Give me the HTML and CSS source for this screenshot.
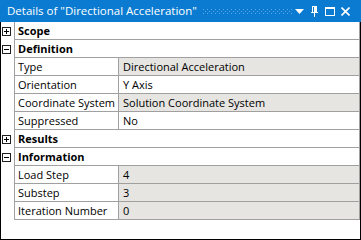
FILE: index.html
```html
<!DOCTYPE html>
<html lang="en">
<head>
    <meta charset="UTF-8">
    <title>Details of "Directional Acceleration"</title>
    <link rel="stylesheet" href="styles.css">
</head>
<body>

    <div class="panel">
        <div class="titlebar">
            <span class="title">Details of "Directional Acceleration"</span>
            <svg class="grip" height="5">
                <defs>
                    <pattern id="dots" width="4" height="4" patternUnits="userSpaceOnUse">
                        <rect x="0" y="0" width="1" height="1" fill="#5fa9e8"/>
                        <rect x="2" y="2" width="1" height="1" fill="#5fa9e8"/>
                    </pattern>
                </defs>
                <rect width="100%" height="5" fill="url(#dots)"/>
            </svg>
            <span class="tools">
                <svg width="9" height="5" class="tool-menu"><polygon points="0,0 9,0 4.5,5" fill="#fff"/></svg>
                <svg width="7" height="11" class="tool-pin">
                    <path d="M1.5 0 V6 M5.5 0 V6 M1 0.5 H6" stroke="#fff" fill="none"/>
                    <rect x="3" y="1" width="2" height="5" fill="#fff"/>
                    <rect x="0" y="6" width="7" height="1" fill="#fff"/>
                    <rect x="3" y="7" width="1" height="4" fill="#fff"/>
                </svg>
                <svg width="10" height="9" class="tool-max">
                    <rect x="0.5" y="0.5" width="9" height="8" stroke="#fff" fill="none"/>
                    <rect x="0" y="0" width="10" height="2" fill="#fff"/>
                </svg>
                <svg width="9" height="9" class="tool-close"><path d="M0.5 0.5 L8.5 8.5 M8.5 0.5 L0.5 8.5" stroke="#fff" stroke-width="1.6"/></svg>
            </span>
        </div>

        <div class="content">
            <table class="props">
                <colgroup>
                    <col class="col-gutter">
                    <col class="col-name">
                    <col class="col-value">
                </colgroup>
                <tr>
                    <td class="gutter"><svg class="toggle" width="9" height="9"><rect x="0.5" y="0.5" width="8" height="8"/><path d="M2 4.5 H7 M4.5 2 V7"/></svg></td>
                    <td class="head" colspan="2">Scope</td>
                </tr>
                <tr>
                    <td class="gutter"><svg class="toggle" width="9" height="9"><rect x="0.5" y="0.5" width="8" height="8"/><path d="M2 4.5 H7"/></svg></td>
                    <td class="head" colspan="2">Definition</td>
                </tr>
                <tr>
                    <td class="gutter"></td>
                    <td class="name">Type</td>
                    <td class="value readonly">Directional Acceleration</td>
                </tr>
                <tr>
                    <td class="gutter"></td>
                    <td class="name">Orientation</td>
                    <td class="value">Y Axis</td>
                </tr>
                <tr>
                    <td class="gutter"></td>
                    <td class="name">Coordinate System</td>
                    <td class="value readonly">Solution Coordinate System</td>
                </tr>
                <tr>
                    <td class="gutter"></td>
                    <td class="name">Suppressed</td>
                    <td class="value">No</td>
                </tr>
                <tr>
                    <td class="gutter"><svg class="toggle" width="9" height="9"><rect x="0.5" y="0.5" width="8" height="8"/><path d="M2 4.5 H7 M4.5 2 V7"/></svg></td>
                    <td class="head" colspan="2">Results</td>
                </tr>
                <tr>
                    <td class="gutter"><svg class="toggle" width="9" height="9"><rect x="0.5" y="0.5" width="8" height="8"/><path d="M2 4.5 H7"/></svg></td>
                    <td class="head" colspan="2">Information</td>
                </tr>
                <tr>
                    <td class="gutter"></td>
                    <td class="name">Load Step</td>
                    <td class="value readonly">4</td>
                </tr>
                <tr>
                    <td class="gutter"></td>
                    <td class="name">Substep</td>
                    <td class="value readonly">3</td>
                </tr>
                <tr>
                    <td class="gutter"></td>
                    <td class="name">Iteration Number</td>
                    <td class="value readonly">0</td>
                </tr>
            </table>
        </div>
    </div>

</body>
</html>
```

FILE: styles.css
```css
body {
    margin: 0;
    font-family: "Open Sans", "Liberation Sans", sans-serif;
    font-size: 11px;
    color: #000;
    background-color: #fff;
}

.panel {
    width: 361px;
    height: 240px;
    display: flex;
    flex-direction: column;
}

.titlebar {
    height: 22px;
    flex: none;
    background-color: #0a7bd0;
    color: #fff;
    display: flex;
    align-items: center;
    padding: 0 11px 0 7px;
    box-sizing: border-box;
}

.title {
    white-space: nowrap;
    font-size: 11.5px;
    line-height: 22px;
}

.grip {
    flex: 1;
    min-width: 0;
    margin: 0 3px 0 6px;
}

.tools {
    display: flex;
    align-items: center;
}

.tools svg {
    display: block;
    flex: none;
}

.tool-menu {
    margin-top: 1px;
}

.tool-pin {
    margin-left: 7px;
}

.tool-max {
    margin-left: 7px;
    margin-top: 1px;
}

.tool-close {
    margin-left: 6px;
    margin-top: 1px;
}

.content {
    flex: 1;
    border: 1px solid #000;
    border-top: none;
}

.props {
    border-collapse: separate;
    border-spacing: 0;
    table-layout: fixed;
    width: 359px;
}

.col-gutter {
    width: 13px;
}

.col-name {
    width: 104px;
}

.col-value {
    width: 242px;
}

.props td {
    height: 17px;
    padding: 0;
    line-height: 17px;
    white-space: nowrap;
    overflow: hidden;
    border-bottom: 1px solid #a0a0a0;
}

.props td.gutter {
    border-bottom: none;
    vertical-align: top;
}

.props td.name {
    padding-left: 3px;
    border-left: 1px solid #a0a0a0;
}

.props td.value {
    padding-left: 4px;
    border-left: 1px solid #a0a0a0;
    border-right: 1px solid #a0a0a0;
}

.props td.head {
    padding-left: 3px;
    font-weight: bold;
    border-left: 1px solid #a0a0a0;
    border-right: 1px solid #a0a0a0;
}

.value.readonly {
    background-color: #e6e5e1;
}

.toggle {
    display: block;
    margin: 5px 0 0 1px;
}

.toggle rect {
    fill: #fff;
    stroke: #1e1e1e;
}

.toggle path {
    stroke: #000;
    fill: none;
}
```
